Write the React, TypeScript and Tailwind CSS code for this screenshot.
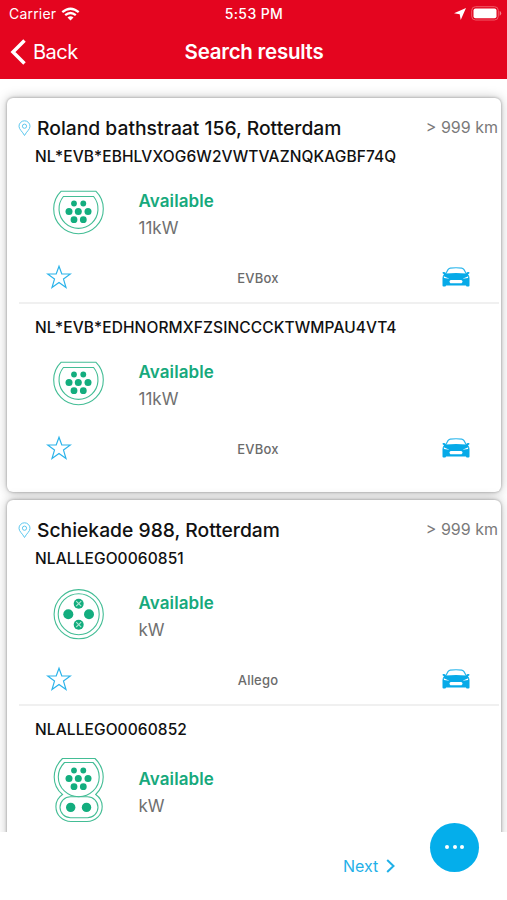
import type { ReactNode } from 'react'

type Connector = 'type2' | 'type3' | 'ccs'

interface Charger {
  id: string
  connector: Connector
  status: string
  power: string
  operator?: string
}

interface Location {
  address: string
  distance: string
  chargers: Charger[]
}

const locations: Location[] = [
  {
    address: 'Roland bathstraat 156, Rotterdam',
    distance: '> 999 km',
    chargers: [
      { id: 'NL*EVB*EBHLVXOG6W2VWTVAZNQKAGBF74Q', connector: 'type2', status: 'Available', power: '11kW', operator: 'EVBox' },
      { id: 'NL*EVB*EDHNORMXFZSINCCCKTWMPAU4VT4', connector: 'type2', status: 'Available', power: '11kW', operator: 'EVBox' },
    ],
  },
  {
    address: 'Schiekade 988, Rotterdam',
    distance: '> 999 km',
    chargers: [
      { id: 'NLALLEGO0060851', connector: 'type3', status: 'Available', power: 'kW', operator: 'Allego' },
      { id: 'NLALLEGO0060852', connector: 'ccs', status: 'Available', power: 'kW' },
    ],
  },
]

// x, y, radius
const pins: [number, number, number][] = [
  [22, 13.5, 2.9],
  [31.3, 13.5, 2.9],
  [17, 21.5, 3.5],
  [26.3, 21.5, 3.5],
  [36, 21.5, 3.5],
  [22, 29.7, 3.4],
  [31.3, 29.7, 3.4],
]

function Pins() {
  return (
    <g fill="#13ad7e" stroke="none">
      {pins.map(([x, y, r]) => <circle key={`${x}-${y}`} cx={x} cy={y} r={r} />)}
    </g>
  )
}

function Type2Icon() {
  return (
    <svg width="53" height="56" viewBox="0 -6 53 56" fill="none" stroke="#43bd95" strokeWidth="1.1">
      <path d="M9.2 1.2H43.8A24.8 24.8 0 1 1 9.2 1.2Z" />
      <path d="M11.4 6.5H41.6A19.5 19.5 0 1 1 11.4 6.5Z" />
      <Pins />
    </svg>
  )
}

function Type3Icon() {
  return (
    <svg width="53" height="56" viewBox="0 0 53 56" fill="none" stroke="#43bd95" strokeWidth="1.1">
      <circle cx="26.7" cy="28.2" r="24.6" />
      <circle cx="26.7" cy="28.2" r="20.5" />
      <g fill="#13ad7e" stroke="none">
        <circle cx="16.3" cy="28.2" r="5" />
        <circle cx="37" cy="28.2" r="5" />
        <circle cx="26.7" cy="17.7" r="5" />
        <circle cx="26.7" cy="38.7" r="5" />
      </g>
      <path d="M24.2 15.2l5 5m0-5l-5 5M24.2 36.2l5 5m0-5l-5 5" stroke="#b5e6d5" />
    </svg>
  )
}

function CcsIcon() {
  return (
    <svg width="53" height="66" viewBox="0 0 53 66" fill="none" stroke="#43bd95" strokeWidth="1.1">
      <path d="M10.5 1.5H43C48 6.5 51.2 13 51.2 20C51.2 27 48.5 33 43.7 37.5C48 40.5 50.2 44.5 50.2 49.5C50.2 58 43.5 64.5 35 64.5H19C10.5 64.5 3.9 58 3.9 49.5C3.9 44.5 6 40.5 10.5 37.5C5 33 2.2 27 2.2 20C2.2 13 5.5 6.5 10.5 1.5Z" />
      <path d="M12.5 5.5H41C45 9.5 47.2 14 47.2 20C47.2 31 38 39.7 26.7 39.7C15.4 39.7 6.3 31 6.3 20C6.3 14 8.5 9.5 12.5 5.5Z" />
      <rect x="8" y="39.7" width="38" height="21" rx="10.5" />
      <Pins />
      <circle cx="18.7" cy="50.4" r="4.7" fill="#13ad7e" stroke="none" />
      <circle cx="34.5" cy="50.4" r="4.7" fill="#13ad7e" stroke="none" />
    </svg>
  )
}

const connectorIcons: Record<Connector, ReactNode> = {
  type2: <Type2Icon />,
  type3: <Type3Icon />,
  ccs: <CcsIcon />,
}

function PinIcon() {
  return (
    <svg width="13" height="17" viewBox="0 0 13 17" fill="none" stroke="#5cc8ef" strokeWidth="1">
      <path d="M6.5 15.5C4.5 11.5 1 9.5 1 6.3a5.5 5.5 0 0 1 11 0C12 9.5 8.5 11.5 6.5 15.5Z" />
      <circle cx="6.5" cy="6.2" r="2.1" />
    </svg>
  )
}

function StarIcon() {
  return (
    <svg width="26" height="26" viewBox="0 0 26 26" fill="none" stroke="#2bb3ea" strokeWidth="1.2">
      <path d="M13 2.2L15.8 10H24.4L17.5 15.1L20 23.6L13 18.5L6 23.6L8.5 15.1L1.6 10H10.2Z" />
    </svg>
  )
}

function CarIcon() {
  return (
    <svg width="28" height="20" viewBox="0 0 28 20">
      <path d="M3.6 7L6 2.6Q6.7 1.4 8.2 1.1Q14 .4 19.8 1.1Q21.300 1.4 22 2.6L24.4 7" fill="none" stroke="#2bb6ec" strokeWidth="1.2" />
      <path d="M.6 5.2Q2.8 4.6 4 6.4Q14 5.800 24 6.4Q25.200 4.600 27.4 5.2V6.3L26 7.200Q27.500 8.700 27.500 11V18.5Q27.500 19.500 26.500 19.500H25Q24 19.500 24 18.600H4Q4 19.500 3 19.500H1.5Q.5 19.500 .5 18.500V11Q.5 8.700 2 7.200L.6 6.300Z" fill="#07aae8" />
      <path d="M1.700 9.200L7.500 11.700L2 11ZM26.300 9.200L20.500 11.700L26 11Z" fill="#fff" />
      <path d="M8.600 13H19.400Q21.600 14.400 19.600 16.200H8.400Q6.400 14.400 8.600 13Z" fill="#fff" />
    </svg>
  )
}

function StatusBar() {
  return (
    <div className="grid h-[27px] grid-cols-3 items-center pr-[5px] pl-[9px] text-[14px]">
      <div className="flex items-center gap-[5px]">
        <span className="tracking-[0.2px]">Carrier</span>
        <svg width="19" height="14" viewBox="0 0 19 14" fill="none" stroke="#fff" strokeWidth="2.3">
          <path d="M1.3 5.2Q9.5 -1.8 17.7 5.2" />
          <path d="M4.2 8.2Q9.5 3.8 14.8 8.2" />
          <path d="M9.5 13.5L6.5 10.5Q9.5 8 12.5 10.5Z" fill="#fff" stroke="none" />
        </svg>
      </div>
      <span className="pr-[3px] text-center font-medium tracking-[0.4px]">5:53 PM</span>
      <div className="flex items-center justify-end gap-[5px]">
        <svg width="12" height="12" viewBox="0 0 12 12" fill="#fff">
          <path d="M12 0L6.7 12L5.7 6.3L0 5.3Z" />
        </svg>
        <svg width="31" height="15" viewBox="0 0 31 15">
          <rect x=".7" y=".7" width="26.6" height="13.3" rx="3.8" fill="none" stroke="#f05a68" />
          <rect x="2.5" y="2.5" width="23" height="9.7" rx="2" fill="#fff" />
          <path d="M28.7 5V9.7Q30.2 9 30.2 7.3T28.7 5Z" fill="#f47c86" />
        </svg>
      </div>
    </div>
  )
}

function NavBar() {
  return (
    <div className="grid h-[50px] grid-cols-[1fr_auto_1fr] items-center px-[10px]">
      <button className="flex items-center gap-[7px] text-[20px]">
        <svg width="16" height="26" viewBox="0 0 16 26" fill="none" stroke="#fff" strokeWidth="3.5">
          <path d="M14.5 1.5L3 13L14.5 24.5" />
        </svg>
        <span className="tracking-[-0.5px]">Back</span>
      </button>
      <h1 className="pl-px text-[20.5px] font-semibold tracking-[-0.25px]">Search results</h1>
    </div>
  )
}

function ChargerRow({ charger, last }: { charger: Charger; last: boolean }) {
  return (
    <div className={last ? 'ml-[12px] mr-[2px] pt-[11px]' : 'ml-[12px] mr-[2px] border-b-2 border-[#f0f0f0]'}>
      <div className="flex h-6 items-center pt-[1px] pl-[16px] text-[15.5px] font-medium tracking-[0.1px]">{charger.id}</div>
      <div className="mt-4 flex items-center pl-[33px]">
        {connectorIcons[charger.connector]}
        <div className="-mb-[2px] ml-[33.5px] pt-[4px] text-[17px] leading-[27px]">
          <div className="font-semibold tracking-[0.1px] text-[#16a97c]">{charger.status}</div>
          <div className="text-[#707070]">{charger.power}</div>
        </div>
      </div>
      {charger.operator && (
        <div className="mt-6 mb-[14px] grid h-6 grid-cols-3 items-center pr-[29px] pl-[27px]">
          <StarIcon />
          <span className="pt-[3px] text-center text-[13px] font-medium tracking-[0.2px] text-[#6b6b6b]">{charger.operator}</span>
          <div className="flex justify-end">
            <CarIcon />
          </div>
        </div>
      )}
    </div>
  )
}

function LocationCard({ location }: { location: Location }) {
  return (
    <section className="shrink-0 rounded-[6px] bg-white pb-[19px] shadow-[0_0_3px_rgba(0,0,0,0.35),0_0_12px_rgba(0,0,0,0.25)]">
      <div className="flex h-[46px] items-center pt-[14px] pr-[3px] pl-[11px]">
        <PinIcon />
        <h2 className="ml-[6px] flex-1 text-[19.3px] font-medium whitespace-nowrap">{location.address}</h2>
        <span className="pb-[2px] text-[16px] text-[#7a7a7a]">{location.distance}</span>
      </div>
      {location.chargers.map((charger, i) => (
        <ChargerRow key={charger.id} charger={charger} last={i === location.chargers.length - 1} />
      ))}
    </section>
  )
}

export default function App() {
  return (
    <div className="flex h-[900px] w-[507px] flex-col overflow-hidden bg-white font-['Inter',sans-serif] text-[#111]">
      <header className="h-[79px] shrink-0 bg-[#e4051f] text-white">
        <StatusBar />
        <NavBar />
      </header>
      <main className="flex h-[753px] shrink-0 flex-col gap-[8px] overflow-hidden pt-[19px] pr-[6px] pl-[7px]">
        {locations.map(location => (
          <LocationCard key={location.address} location={location} />
        ))}
      </main>
      <footer className="relative h-[68px] bg-white">
        <button className="mt-[22px] ml-[343px] flex h-6 items-center gap-[8px] text-[16px] text-[#1fb0e8]">
          <span>Next</span>
          <svg width="9" height="14" viewBox="0 0 9 14" fill="none" stroke="#1fb0e8" strokeWidth="2">
            <path d="M1.2 1L7.5 7L1.2 13" />
          </svg>
        </button>
        <button className="absolute -top-[9px] left-[430px] flex h-[49px] w-[49px] items-center justify-center gap-[3.5px] rounded-full bg-[#04aeeb] pb-[2px]">
          <span className="h-[4px] w-[4px] rounded-full bg-white" />
          <span className="h-[4px] w-[4px] rounded-full bg-white" />
          <span className="h-[4px] w-[4px] rounded-full bg-white" />
        </button>
      </footer>
    </div>
  )
}
